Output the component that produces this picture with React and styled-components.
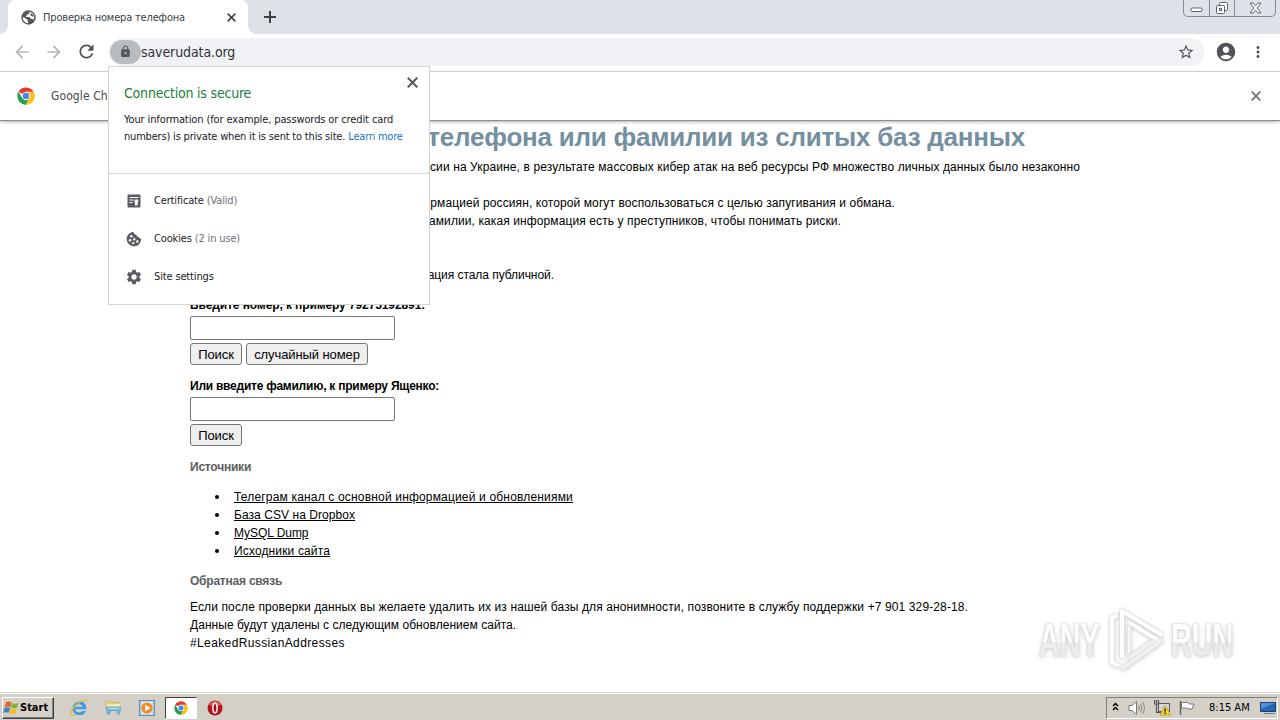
import styled, { createGlobalStyle, css } from "styled-components";
import {
  MdAccountCircle,
  MdArrowBack,
  MdArrowForward,
  MdLock,
  MdMoreVert,
  MdRefresh,
  MdSettings,
  MdStarBorder,
} from "react-icons/md";

const links = [
  { text: "Телеграм канал с основной информацией и обновлениями", ls: 0.173 },
  { text: "База CSV на Dropbox", ls: 0.06 },
  { text: "MySQL Dump", ls: -0.04 },
  { text: "Исходники сайта", ls: 0.14 },
];

// only the ends of these lines stick out from under the popup
const intro = [
  { width: 890, ls: 0.11, text: "сии на Украине, в результате массовых кибер атак на веб ресурсы РФ множество личных данных было незаконно" },
  { width: 0, ls: 0, text: "" },
  { width: 705, ls: 0.1, text: "рмацией россиян, которой могут воспользоваться с целью запугивания и обмана." },
  { width: 651, ls: 0.1, text: "амилии, какая информация есть у преступников, чтобы понимать риски." },
  { width: 0, ls: 0, text: "" },
  { width: 0, ls: 0, text: "" },
  { width: 364, ls: -0.05, text: "ация стала публичной." },
];

function CloseIcon({ size }) {
  return (
    <svg width={size} height={size} viewBox="0 0 10 10">
      <path d="M.7.7l8.600 8.600M9.300.7.7 9.300" stroke="currentColor" strokeWidth="1.700" />
    </svg>
  );
}

function ChromeLogo({ size }) {
  return (
    <svg width={size} height={size} viewBox="0 0 48 48">
      <path d="M24 24 4.1 12.5A23 23 0 0 1 43.9 12.5H24z" fill="#e33b2e" />
      <path d="M24 13.5h20.4A23 23 0 0 1 23.5 47L34 29z" fill="#fbc116" />
      <path d="M4.1 12.5 14.5 30 24 35l-1 12A23 23 0 0 1 4.1 12.5z" fill="#2a9d4b" />
      <path d="M14.9 29.3 24 34.5l10-5.3L23.4 47A23 23 0 0 1 10 42z" fill="#2a9d4b" />
      <path d="M33.2 29.3 44.4 13.5A23 23 0 0 1 23.4 47z" fill="#fbc116" />
      <circle cx="24" cy="24" r="11" fill="#fff" />
      <circle cx="24" cy="24" r="8.6" fill="#4285f4" />
    </svg>
  );
}

function GlobeIcon() {
  return (
    <svg width="15" height="15" viewBox="0 0 15 15">
      <circle cx="7.500" cy="7.500" r="7.200" fill="#55585c" />
      <path d="M8.500 1.800c-.3 1.500-.2 2.200-1.800 2.400-.7.100-.3 1.500-1.600 1.600-.5.200-.3 1.200.4 1.200H8c1.200 0 .8 1.700 2 1.700 1.300 0 1.500.5 2.700.7.400-1.200.5-2.600 0-4C12 3.500 10.500 2.200 8.500 1.800z" fill="#fff" />
      <path d="M1.800 7c1.500 1 3 .8 3.500 2 .3 1 1.700.7 1.700 1.700v2.500C4 13 1.700 10.500 1.800 7z" fill="#fff" />
      <path d="M9.500 3.200c1.500.4 2.500 1.600 3 3-1 .3-2 .3-2.700-.6-.4-.6-.8-1.500-.3-2.400z" fill="#55585c" />
    </svg>
  );
}

function CookieIcon() {
  return (
    <svg width="16" height="16" viewBox="0 0 16 16">
      <path d="M7.500.8c.2 2 1.200 2.900 2.700 2.800.2 1.700 1.400 2.500 2.700 2.400.2 1 1 1.500 2.300 1.600A7.300 7.300 0 1 1 7.500.8z" fill="#5a5d61" />
      <g fill="#fff">
        <circle cx="5.300" cy="5.300" r="1.250" />
        <circle cx="4" cy="9.300" r="1.200" />
        <circle cx="8.200" cy="8.300" r="1.200" />
        <circle cx="7.300" cy="12.200" r="1.150" />
        <circle cx="11.400" cy="10.500" r="1.200" />
      </g>
    </svg>
  );
}

function CertificateIcon() {
  return (
    <svg width="14" height="14" viewBox="0 0 14 14">
      <path d="M1.500.5h11a1 1 0 0 1 1 1v11a1 1 0 0 1-1 1h-11a1 1 0 0 1-1-1v-11a1 1 0 0 1 1-1z" fill="#5a5d61" />
      <path d="M2.500 3.500h9M2.500 6h4M2.500 8.500h3" stroke="#fff" strokeWidth="1" />
      <circle cx="9.300" cy="7.300" r="2" fill="#fff" />
      <path d="M8 8.500h2.600v3.500l-1.300-.9-1.300.9z" fill="#fff" />
    </svg>
  );
}

function WindowsFlag() {
  return (
    <svg width="17" height="16" viewBox="0 0 17 16">
      <path d="M3 2.500C5 1 7 1.500 8.600 2.500L7.200 7.300C5.500 6.300 3.600 6.200 1.600 7.300z" fill="#e8602c" />
      <path d="M9.300 2.900c2 1 4.100 1 6.300-.2l-1.500 4.900c-2 1-4 1.100-6.200 0z" fill="#7fb63a" />
      <path d="M1.400 8.100c2-1.100 4-.9 5.600 0l-1.400 4.800C4 12 2 12 0 12.900z" fill="#3d84c9" />
      <path d="M7.700 8.400c2 1.100 4.200 1.100 6.200 0l-1.400 4.900c-2 1.100-4.200 1-6.200-.1z" fill="#f5bd2b" />
    </svg>
  );
}

function ExplorerIcon() {
  return (
    <svg width="18" height="18" viewBox="0 0 18 18">
      <path d="M5.300 10.200h11c.5-4.500-2.200-7.700-6.600-7.700-4.200 0-7.200 3-7.200 6.900 0 4 3 6.700 7 6.700 3.200 0 5.600-1.500 6.500-4.200h-3.800c-1.600 2.300-6.600 1.900-6.900-1.700zm.1-2.400c.6-3.500 6.800-3.500 7.200 0z" fill="#3d9ddd" />
      <path d="M16.500 3.500c1-4-4-2.500-8 .5C3.500 7.500-.5 13.500 1 16c1 1.200 3 .3 4.500-.5" fill="none" stroke="#e5b844" strokeWidth="1.300" />
    </svg>
  );
}

function FolderIcon() {
  return (
    <svg width="17" height="17" viewBox="0 0 17 17">
      <path d="M1 3.500 2 2h4l1 1.500h8V9H1z" fill="#e9cf76" stroke="#c4a851" strokeWidth=".6" />
      <path d="M2 5h13l.5 4H1.500z" fill="#f8eaae" />
      <path d="M1.500 8h14l-.8 7h-2.500v-3.500H5V15H2.200z" fill="#79bde0" stroke="#5193bb" strokeWidth=".7" />
      <path d="M3 9.300h11" stroke="#c8e8f7" />
    </svg>
  );
}

function PlayerIcon() {
  return (
    <svg width="16" height="16" viewBox="0 0 16 16">
      <rect x=".5" y=".5" width="15" height="15" fill="#a9cbe5" stroke="#5d8fb8" />
      <rect x="2.500" y="1.500" width="11" height="13" fill="#d7e8f4" />
      <circle cx="8" cy="8" r="5.600" fill="#f08a1d" />
      <path d="M6.200 4.700v6.600L11.500 8z" fill="#fff" />
    </svg>
  );
}

function OperaIcon() {
  return (
    <svg width="16" height="16" viewBox="0 0 16 16">
      <circle cx="8" cy="8" r="7.500" fill="#b5161b" />
      <path d="M2 4.500a7 7 0 0 1 12 0C11 6.500 5 6.500 2 4.500z" fill="#d95a5a" />
      <ellipse cx="8" cy="8" rx="2.100" ry="4.800" fill="#a01015" stroke="#fff" strokeWidth="1.500" />
    </svg>
  );
}

function WindowControls() {
  return (
    <ControlBox>
      <Control $width={25}>
        <svg width="13" height="6" viewBox="0 0 13 6">
          <rect x="1" y="1" width="11" height="3.500" rx="1" fill="#fff" stroke="#5c6270" />
        </svg>
      </Control>
      <Control $width={25}>
        <svg width="14" height="13" viewBox="0 0 14 13">
          <rect x="4.500" y=".5" width="8" height="8" rx="1" fill="#fff" stroke="#5c6270" />
          <rect x="1.500" y="3.500" width="8" height="8" rx="1" fill="#fff" stroke="#5c6270" />
          <rect x="4.500" y="6.500" width="2" height="2" fill="none" stroke="#5c6270" />
        </svg>
      </Control>
      <Control $width={41}>
        <svg width="13" height="12" viewBox="0 0 13 12">
          <path d="M1 1h3l2.500 2.800L9 1h3L8.200 6l3.800 5H9L6.500 8.200 4 11H1l3.800-5z" fill="#fff" stroke="#5c6270" />
        </svg>
      </Control>
    </ControlBox>
  );
}

function SiteInfo() {
  return (
    <Popup>
      <PopupHead>
        <PopupClose>
          <CloseIcon size={11} />
        </PopupClose>
        <Secure>Connection is secure</Secure>
        <PopupText>
          <Spaced $ls={-0.115}>Your information (for example, passwords or credit card</Spaced>
          <br />
          <Spaced $ls={-0.19}>numbers) is private when it is sent to this site.</Spaced>{" "}
          <LearnMore>Learn more</LearnMore>
        </PopupText>
      </PopupHead>
      <PopupList>
        <PopupRow>
          <PopupIcon><CertificateIcon /></PopupIcon>
          <PopupLabel>Certificate <Muted>(Valid)</Muted></PopupLabel>
        </PopupRow>
        <PopupRow>
          <PopupIcon><CookieIcon /></PopupIcon>
          <PopupLabel>Cookies <Muted>(2 in use)</Muted></PopupLabel>
        </PopupRow>
        <PopupRow>
          <PopupIcon><MdSettings size={18} /></PopupIcon>
          <PopupLabel>Site settings</PopupLabel>
        </PopupRow>
      </PopupList>
    </Popup>
  );
}

function Watermark() {
  return (
    <Mark>
      <MarkText>ANY</MarkText>
      <svg width="60" height="66" viewBox="0 0 60 66">
        <g fill="none" stroke="#fff" strokeWidth="4" strokeLinejoin="round" strokeLinecap="round">
          <path d="M8 9 4 11v44l5 3" />
          <path d="M14 49V4l39 23.500" />
          <path d="M22 16l27 16.500" />
          <path d="M53 34 15 61" stroke="#efefef" />
          <path d="M47 33 22 50" stroke="#efefef" />
          <path d="M21 20v25" stroke="#f7f7f7" strokeWidth="3" />
        </g>
      </svg>
      <MarkText>RUN</MarkText>
    </Mark>
  );
}

function Taskbar() {
  return (
    <Bar>
      <StartButton>
        <WindowsFlag />
        Start
      </StartButton>
      <Launcher>
        <Launch><ExplorerIcon /></Launch>
        <Launch><FolderIcon /></Launch>
        <Launch><PlayerIcon /></Launch>
        <Launch $active><ChromeLogo size={14} /></Launch>
        <Launch><OperaIcon /></Launch>
      </Launcher>
      <Tray>
        <svg width="8" height="11" viewBox="0 0 8 11">
          <path d="M1 4 3.500 1.500 6 4M1 8 3.500 5.500 6 8" fill="none" stroke="#000" strokeWidth="1.500" />
        </svg>
        <svg width="18" height="16" viewBox="0 0 18 16">
          <path d="M1 5.500h3L8.500 1.500v13L4 10.500H1z" fill="#fff" stroke="#777" />
          <path d="M10.500 5.500q1.500 2.500 0 5M12.500 3.800q2.600 4.200 0 8.400M14.500 2q3.800 6 0 12" fill="none" stroke="#888" />
        </svg>
        <svg width="17" height="17" viewBox="0 0 17 17">
          <rect x="4.500" y="4.500" width="11" height="8" fill="#d3d4d6" stroke="#5b5b5b" />
          <path d="M.5 1v4h4V1M2.500 1v3M2.500 5.500v8h5" fill="none" stroke="#555" strokeWidth="1.200" />
          <path d="M11 6.500 16.500 16H5.800z" fill="#f8d32c" stroke="#b8912a" strokeWidth=".7" />
          <path d="M11.100 9.500v3.200M11.100 13.600v1.300" stroke="#222" strokeWidth="1.300" />
        </svg>
        <svg width="17" height="16" viewBox="0 0 17 16">
          <path d="M1.500 1v14" stroke="#666" strokeWidth="1.500" />
          <path d="M2.500 2.500h6L10 4h5l-2 5H9L7.500 8h-5z" fill="#fff" stroke="#777" />
        </svg>
        <Clock>8:15 AM</Clock>
        <svg width="16" height="14" viewBox="0 0 16 14">
          <path d="M.5 1.500h15v9H.5z" fill="#2767b5" stroke="#183f74" />
          <path d="M1 2h14L1 8z" fill="#4f91d8" />
          <path d="M4 12.500h11" stroke="#5d7da5" />
        </svg>
      </Tray>
    </Bar>
  );
}

export default function App() {
  return (
    <>
      <GlobalStyle />
      <Screen>
        <TabStrip>
          <Tab>
            <GlobeIcon />
            <TabTitle>Проверка номера телефона</TabTitle>
            <CloseIcon size={9} />
          </Tab>
          <NewTab>
            <svg width="12" height="12" viewBox="0 0 12 12">
              <path d="M6 0v12M0 6h12" stroke="#3c4043" strokeWidth="2" />
            </svg>
          </NewTab>
          <WindowControls />
        </TabStrip>

        <Toolbar>
          <NavIcon $off><MdArrowBack size={20} /></NavIcon>
          <NavIcon $off><MdArrowForward size={20} /></NavIcon>
          <NavIcon><MdRefresh size={21} /></NavIcon>
          <Omnibox>
            <LockChip><MdLock size={13} /></LockChip>
            <Url>saverudata.org</Url>
            <MdStarBorder size={18} />
          </Omnibox>
          <ToolIcon $left={11}><MdAccountCircle size={22} /></ToolIcon>
          <ToolIcon $left={12}><MdMoreVert size={18} /></ToolIcon>
        </Toolbar>

        <InfoBar>
          <ChromeLogo size={18} />
          <InfoText>Google Ch</InfoText>
          <CloseIcon size={10} />
        </InfoBar>

        <Page>
          <Title>телефона или фамилии из слитых баз данных</Title>
          {intro.map((line, i) => (
            <IntroLine key={i} $width={line.width}>
              <Spaced $ls={line.ls}>{line.text}</Spaced>
            </IntroLine>
          ))}
          <Form>
            <Label $ls={-0.1}>Введите номер, к примеру 79275192891:</Label>
            <Input type="text" />
            <Buttons>
              <Button $width={52}>Поиск</Button>
              <Button $width={122}>случайный номер</Button>
            </Buttons>
          </Form>
          <Form>
            <Label $ls={-0.245}>Или введите фамилию, к примеру Ященко:</Label>
            <Input type="text" />
            <Buttons>
              <Button $width={52}>Поиск</Button>
            </Buttons>
          </Form>
          <Heading>Источники</Heading>
          <Links>
            {links.map((link) => (
              <LinkItem key={link.text}>
                <Link href="#" $ls={link.ls}>{link.text}</Link>
              </LinkItem>
            ))}
          </Links>
          <Heading>Обратная связь</Heading>
          <Feedback>
            <Spaced $ls={0.118}>
              Если после проверки данных вы желаете удалить их из нашей базы для анонимности, позвоните в службу поддержки +7 901 329-28-18.
            </Spaced>
            <br />
            <Spaced $ls={0.04}>Данные будут удалены с следующим обновлением сайта.</Spaced>
            <br />
            <Spaced $ls={0.38}>#LeakedRussianAddresses</Spaced>
          </Feedback>
        </Page>

        <Taskbar />
        <SiteInfo />
        <Watermark />
      </Screen>
    </>
  );
}

const uiFont = '"DejaVu Sans Condensed", "DejaVu Sans", sans-serif';

const GlobalStyle = createGlobalStyle`
  * {
    box-sizing: border-box;
  }
  body {
    margin: 0;
    background: #fff;
  }
  svg {
    display: block;
    flex: none;
  }
`;

const Screen = styled.div`
  position: relative;
  display: flex;
  flex-direction: column;
  width: 1280px;
  height: 720px;
  overflow: hidden;
  background: #fff;
  font-family: ${uiFont};
`;

const TabStrip = styled.header`
  display: flex;
  flex: none;
  height: 34px;
  padding: 0 4px 0 8px;
  background: #dee1e7;
`;

const Tab = styled.div`
  position: relative;
  display: flex;
  align-items: center;
  width: 240px;
  padding: 0 12px 0 13px;
  background: #fff;
  border-radius: 7px 7px 0 0;
  color: #3c4043;
  /* flared feet of the tab */
  &::before,
  &::after {
    content: "";
    position: absolute;
    bottom: 0;
    width: 8px;
    height: 8px;
  }
  &::before {
    left: -8px;
    background: radial-gradient(circle at 0 0, #dee1e7 7.5px, #fff 8px);
  }
  &::after {
    right: -8px;
    background: radial-gradient(circle at 100% 0, #dee1e7 7.5px, #fff 8px);
  }
`;

const TabTitle = styled.span`
  flex: 1;
  margin-left: 7px;
  font-size: 11px;
  letter-spacing: -0.17px;
  white-space: nowrap;
`;

const NewTab = styled.div`
  display: flex;
  align-items: center;
  margin-left: 16px;
`;

const ControlBox = styled.div`
  display: flex;
  height: 17px;
  margin-left: auto;
  border: 1px solid #868a93;
  border-top: none;
  border-radius: 0 0 5px 5px;
`;

const Control = styled.div`
  display: flex;
  justify-content: center;
  align-items: center;
  width: ${(p) => p.$width}px;
  & + & {
    border-left: 1px solid #868a93;
  }
  &:first-child {
    padding-top: 4px;
  }
`;

const Toolbar = styled.div`
  display: flex;
  flex: none;
  align-items: center;
  height: 38px;
  padding: 0 12px 2px;
  border-bottom: 1px solid #d9dbde;
`;

const NavIcon = styled.div`
  display: flex;
  justify-content: center;
  width: 20px;
  margin-right: 12px;
  color: ${(p) => (p.$off ? "#b4b6b8" : "#4f5256")};
`;

const Omnibox = styled.div`
  display: flex;
  flex: 1;
  align-items: center;
  height: 28px;
  margin-left: 1px;
  padding-right: 9px;
  border-radius: 14px;
  background: #f0f2f5;
  color: #54575b;
`;

const LockChip = styled.div`
  display: flex;
  justify-content: center;
  align-items: center;
  width: 31px;
  height: 24px;
  margin-left: 1px;
  border-radius: 12px;
  background: #b9bcbe;
`;

const Url = styled.span`
  flex: 1;
  font-size: 14px;
  letter-spacing: -0.1px;
  color: #303336;
`;

const ToolIcon = styled.div`
  margin-left: ${(p) => p.$left}px;
  color: #505357;
  & + & {
    margin-right: 1px;
  }
`;

const InfoBar = styled.div`
  position: relative;
  display: flex;
  flex: none;
  align-items: center;
  height: 49px;
  padding: 0 19px 0 17px;
  border-bottom: 1px solid #8e8e8e;
  box-shadow: 0 1px 3px rgba(0, 0, 0, 0.3);
  color: #707376;
`;

const InfoText = styled.span`
  flex: 1;
  margin-left: 16px;
  font-size: 12px;
  letter-spacing: 0.1px;
  color: #45484b;
`;

const Page = styled.main`
  flex: 1;
  min-height: 0;
  padding: 1px 0 0 190px;
  font: 12px/18px "Liberation Sans", Arial, sans-serif;
  color: #000;
`;

const Title = styled.h1`
  width: 835px;
  margin: 0 0 6px;
  display: flex;
  justify-content: flex-end;
  font-size: 26px;
  line-height: 30px;
  letter-spacing: -0.23px;
  white-space: nowrap;
  color: #748f9f;
`;

const IntroLine = styled.div`
  display: flex;
  justify-content: flex-end;
  width: ${(p) => p.$width}px;
  height: 18px;
  overflow: hidden;
  white-space: nowrap;
`;

const Spaced = styled.span`
  letter-spacing: ${(p) => p.$ls}px;
`;

const Form = styled.form`
  display: flex;
  flex-direction: column;
  margin-top: 12px;
`;

const Label = styled.label`
  height: 20px;
  font-weight: bold;
  letter-spacing: ${(p) => p.$ls}px;
`;

const Input = styled.input`
  width: 205px;
  height: 24px;
  padding: 1px 2px;
  border: 1px solid #767676;
  border-radius: 2px;
  background: #fff;
`;

const Buttons = styled.div`
  display: flex;
  gap: 4px;
  height: 22px;
  margin-top: 3px;
`;

const Button = styled.button`
  width: ${(p) => p.$width}px;
  padding: 0;
  border: 1px solid #767676;
  border-radius: 3px;
  background: #efefef;
  font: 13px "Liberation Sans", Arial, sans-serif;
  letter-spacing: -0.1px;
  color: #000;
`;

const Heading = styled.h3`
  margin: 12px 0 0;
  font-size: 12px;
  line-height: 18px;
  letter-spacing: -0.22px;
  color: #5a615f;
`;

const Links = styled.ul`
  margin: 12px 0 0;
  padding-left: 25px;
  list-style: none;
`;

const LinkItem = styled.li`
  display: flex;
  align-items: center;
  &::before {
    content: "";
    width: 4px;
    height: 4px;
    margin-right: 15px;
    border-radius: 50%;
    background: #000;
  }
`;

const Link = styled.a`
  color: #000;
  letter-spacing: ${(p) => p.$ls}px;
`;

const Feedback = styled.p`
  margin: 8px 0 0;
`;

const raised = css`
  border: 1px solid;
  border-color: #fff #404040 #404040 #fff;
`;

const Bar = styled.footer`
  display: flex;
  flex: none;
  align-items: center;
  height: 28px;
  padding: 3px 2px 1px;
  border-top: 1px solid #d4d0c8;
  background: #d4d0c8;
  box-shadow: inset 0 1px #fff;
  font-size: 11px;
`;

const StartButton = styled.div`
  ${raised}
  display: flex;
  align-items: center;
  width: 52px;
  height: 22px;
  box-shadow: inset -1px -1px #808080;
  font-weight: bold;
`;

const Launcher = styled.div`
  display: flex;
  align-items: center;
  gap: 2px;
  flex: 1;
  margin-left: 9px;
`;

const Launch = styled.div`
  display: flex;
  justify-content: center;
  align-items: center;
  width: 32px;
  height: 22px;
  ${(p) =>
    p.$active &&
    css`
      border: 1px solid;
      border-color: #404040 #fff #fff #404040;
      background: #fff;
    `}
`;

const Tray = styled.div`
  display: flex;
  align-items: center;
  gap: 8px;
  width: 172px;
  height: 22px;
  padding-left: 5px;
  border: 1px solid;
  border-color: #808080 #fff #fff #808080;
`;

const Clock = styled.span`
  margin: 0 2px 0 5px;
  white-space: nowrap;
`;

const Popup = styled.aside`
  position: absolute;
  left: 108px;
  top: 66px;
  width: 322px;
  height: 239px;
  border: 1px solid #d2d4d4;
  background: #fff;
  font-size: 11px;
  color: #202124;
`;

const PopupHead = styled.div`
  position: relative;
  height: 107px;
  padding: 17px 15px 0;
  border-bottom: 1px solid #d6d8d8;
`;

const PopupClose = styled.div`
  position: absolute;
  top: 10px;
  right: 11px;
  color: #55585c;
`;

const Secure = styled.div`
  font-size: 14px;
  line-height: 18px;
  letter-spacing: -0.2px;
  color: #188038;
`;

const PopupText = styled.p`
  margin: 9px 0 0;
  line-height: 17px;
  white-space: nowrap;
`;

const LearnMore = styled.a`
  letter-spacing: -0.2px;
  color: #1a73c8;
`;

const PopupList = styled.div`
  padding-top: 8px;
`;

const PopupRow = styled.div`
  display: flex;
  align-items: center;
  height: 38px;
  padding-left: 16px;
`;

const PopupIcon = styled.div`
  display: flex;
  justify-content: center;
  width: 18px;
  margin-right: 11px;
  color: #5a5d61;
`;

const PopupLabel = styled.span`
  padding-bottom: 2px;
  letter-spacing: -0.15px;
`;

const Muted = styled.span`
  color: #6c7074;
`;

const Mark = styled.div`
  position: absolute;
  left: 1039px;
  top: 607px;
  display: flex;
  align-items: center;
  width: 196px;
  height: 66px;
  gap: 3px;
  filter: drop-shadow(0 0 1px #cdcdcd) drop-shadow(0 1px 2px #d6d6d6);
`;

const MarkText = styled.span`
  flex: none;
  width: 106px;
  margin-right: -40px;
  font: bold 47px/66px "Liberation Sans", Arial, sans-serif;
  background: linear-gradient(#fff 52%, #ececec 54%);
  background-clip: text;
  color: transparent;
  transform: scaleX(0.61);
  transform-origin: left center;
  white-space: nowrap;
`;
